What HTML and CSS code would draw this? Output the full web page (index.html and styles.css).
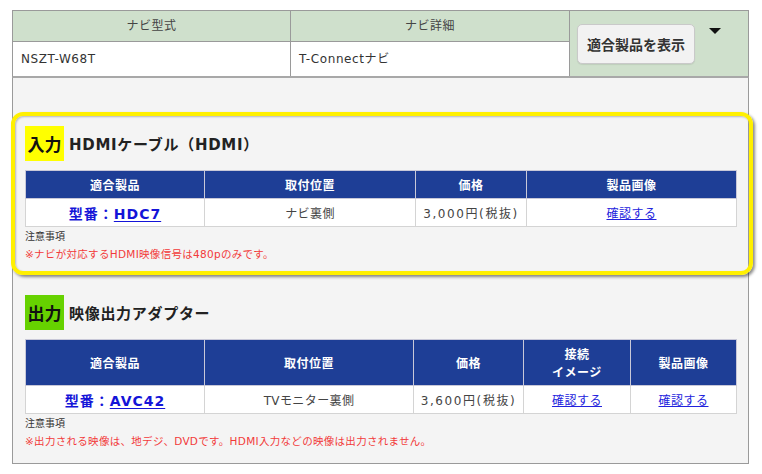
FILE: index.html
```html
<!DOCTYPE html>
<html lang="ja">
<head>
<meta charset="utf-8">
<link rel="stylesheet" href="styles.css">
</head>
<body>
<div class="wrap">
  <div class="navi">
    <div class="navi-cols">
      <div class="navi-col c1">
        <div class="nh">ナビ型式</div>
        <div class="nd">NSZT-W68T</div>
      </div>
      <div class="navi-col c2">
        <div class="nh">ナビ詳細</div>
        <div class="nd">T-Connectナビ</div>
      </div>
    </div>
    <div class="navi-btn">
      <button class="show-btn">適合製品を表示</button>
      <span class="tri"></span>
    </div>
  </div>
  <div class="panel">
    <section class="sec">
      <h2 class="sec-title"><span class="tag tag-in">入力</span>HDMIケーブル（HDMI）</h2>
      <table class="prod t1">
        <thead>
          <tr><th class="w1">適合製品</th><th class="w2">取付位置</th><th class="w3">価格</th><th>製品画像</th></tr>
        </thead>
        <tbody>
          <tr><td class="model"><a>型番：<u>HDC7</u></a></td><td>ナビ裏側</td><td class="price">3,000円(税抜)</td><td><a class="lnk">確認する</a></td></tr>
        </tbody>
      </table>
      <p class="note-h">注意事項</p>
      <p class="note">※ナビが対応するHDMI映像信号は480pのみです。</p>
    </section>
    <section class="sec sec2">
      <h2 class="sec-title"><span class="tag tag-out">出力</span>映像出力アダプター</h2>
      <table class="prod t2">
        <thead>
          <tr><th class="w1">適合製品</th><th class="w2b">取付位置</th><th class="w3b">価格</th><th class="w4b">接続<br>イメージ</th><th>製品画像</th></tr>
        </thead>
        <tbody>
          <tr><td class="model"><a>型番：<u>AVC42</u></a></td><td>TVモニター裏側</td><td class="price">3,600円(税抜)</td><td><a class="lnk">確認する</a></td><td><a class="lnk">確認する</a></td></tr>
        </tbody>
      </table>
      <p class="note-h">注意事項</p>
      <p class="note">※出力される映像は、地デジ、DVDです。HDMI入力などの映像は出力されません。</p>
    </section>
    <div class="hl"></div>
  </div>
</div>
</body>
</html>
```
FILE: styles.css
```css
* { box-sizing: border-box; }
html, body { margin: 0; padding: 0; background: #fff; }
body {
  font-family: "DejaVu Sans", "Noto Sans CJK JP", sans-serif;
  color: #333;
  width: 762px;
  height: 474px;
  overflow: hidden;
}
.wrap {
  margin: 10px 0 0 12px;
  width: 737px;
}
.navi {
  display: flex;
  border: 1px solid #9a9a9a;
  border-bottom: 2px solid #a8a8a8;
  height: 68px;
}
.navi-cols { display: flex; }
.navi-col { display: flex; flex-direction: column; border-right: 1px solid #9a9a9a; }
.c1 { width: 278px; }
.c2 { width: 279px; }
.nh {
  height: 31px;
  background: #cfe0cc;
  border-bottom: 1px solid #9a9a9a;
  text-align: center;
  font-size: 12px;
  line-height: 30px;
  color: #444;
  letter-spacing: 0.5px;
}
.nd {
  flex: 1;
  background: #fff;
  font-size: 12px;
  letter-spacing: 0.6px;
  line-height: 34px;
  padding-left: 8px;
  color: #333;
}
.navi-btn {
  flex: 1;
  background: #cfe0cc;
  position: relative;
  padding: 13px 0 0 7px;
}
.show-btn {
  width: 118px;
  height: 40px;
  background: #f2f2f2;
  border: 1px solid #c9c9c9;
  border-radius: 5px;
  font-family: "Noto Sans CJK JP", sans-serif;
  font-weight: bold;
  font-size: 14px;
  color: #333;
  padding: 0;
  box-shadow: 0 1px 1px rgba(0,0,0,0.08);
}
.tri {
  position: absolute;
  left: 139px;
  top: 17px;
  width: 0;
  height: 0;
  border-left: 6px solid transparent;
  border-right: 6px solid transparent;
  border-top: 6px solid #111;
}
.panel {
  position: relative;
  background: #f4f4f4;
  border: 1px solid #9a9a9a;
  border-top: none;
  height: 386px;
  padding: 48px 11px 0 12px;
}
.sec-title {
  margin: 0;
  display: flex;
  align-items: center;
  font-size: 15px;
  font-weight: bold;
  color: #222;
  height: 35px;
  letter-spacing: 0.7px;
}
.tag {
  display: inline-flex;
  align-items: center;
  justify-content: center;
  width: 39px;
  height: 35px;
  font-size: 17px;
  font-weight: bold;
  color: #111;
  margin-right: 5px;
  letter-spacing: 0;
  font-family: "Noto Sans CJK JP", sans-serif;
}
.tag-in { background: #ffff00; }
.tag-out { background: #66d200; }
.prod {
  margin-top: 9px;
  width: 712px;
  border-collapse: collapse;
  table-layout: fixed;
  background: #fff;
}
.prod th {
  background: #1e3e96;
  color: #fff;
  font-size: 12px;
  font-weight: bold;
  height: 28px;
  border: 1px solid #c8c8d8;
  padding: 0;
  line-height: 18px;
  letter-spacing: 0.5px;
  font-family: "Noto Sans CJK JP", sans-serif;
}
.t2 th { height: 46px; }
.prod td {
  height: 28px;
  border: 1px solid #d4d4d4;
  text-align: center;
  font-size: 12px;
  color: #444;
  padding: 0;
  letter-spacing: 0.4px;
}
.w1 { width: 179px; }
.w2 { width: 211px; }
.w3 { width: 111px; }
.w2b { width: 209px; }
.w3b { width: 110px; }
.w4b { width: 107px; }
.prod td.price { font-size: 12px; letter-spacing: 1.6px; }
.model a {
  color: #1414d8;
  font-weight: bold;
  font-size: 14px;
  letter-spacing: 1px;
}
.model u { text-decoration-thickness: 1px; text-underline-offset: 2px; }
.lnk {
  color: #2222dd;
  text-decoration: underline;
  font-size: 12px;
  letter-spacing: 0.5px;
}
.note-h {
  margin: 2px 0 0;
  font-size: 10px;
  line-height: 16px;
  color: #333;
}
.note {
  margin: 1px 0 0;
  font-size: 10.5px;
  line-height: 16px;
  color: #f23a3a;
  letter-spacing: 0.3px;
}
.sec2 { margin-top: 33px; }
.hl {
  position: absolute;
  left: -2px;
  top: 34px;
  width: 742px;
  height: 163px;
  border: 4px solid #fff000;
  border-radius: 12px;
  box-shadow: 2px 2px 3px rgba(0,0,0,0.45), inset 1px 1px 2px rgba(0,0,0,0.25);
  pointer-events: none;
}
```
